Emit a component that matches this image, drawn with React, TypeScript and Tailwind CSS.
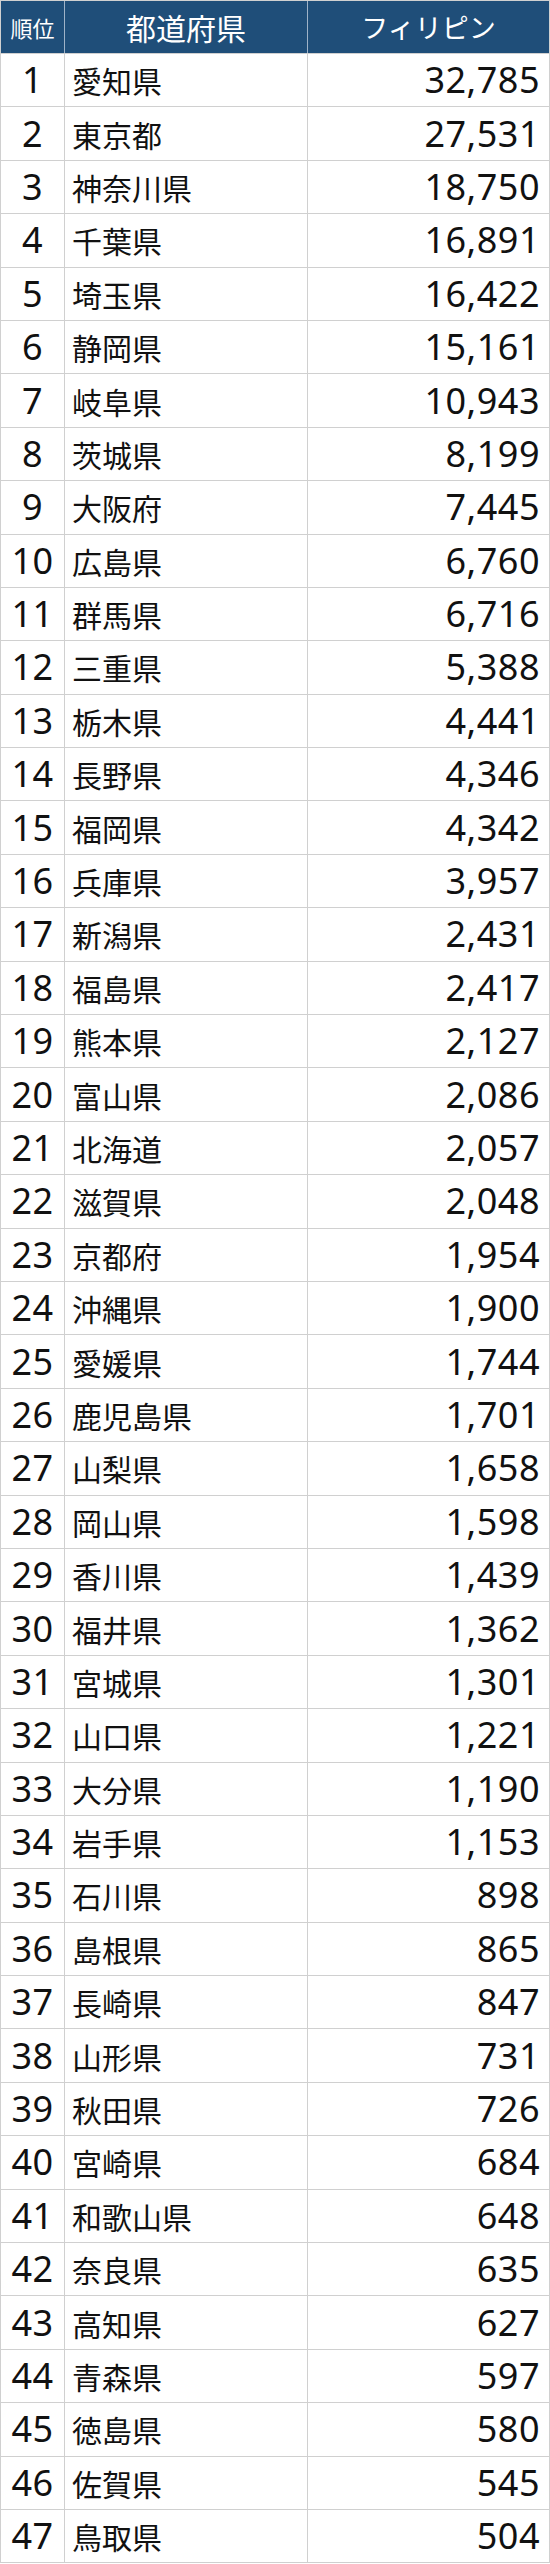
const rows: [string, string][] = [
  ['愛知県', '32,785'],
  ['東京都', '27,531'],
  ['神奈川県', '18,750'],
  ['千葉県', '16,891'],
  ['埼玉県', '16,422'],
  ['静岡県', '15,161'],
  ['岐阜県', '10,943'],
  ['茨城県', '8,199'],
  ['大阪府', '7,445'],
  ['広島県', '6,760'],
  ['群馬県', '6,716'],
  ['三重県', '5,388'],
  ['栃木県', '4,441'],
  ['長野県', '4,346'],
  ['福岡県', '4,342'],
  ['兵庫県', '3,957'],
  ['新潟県', '2,431'],
  ['福島県', '2,417'],
  ['熊本県', '2,127'],
  ['富山県', '2,086'],
  ['北海道', '2,057'],
  ['滋賀県', '2,048'],
  ['京都府', '1,954'],
  ['沖縄県', '1,900'],
  ['愛媛県', '1,744'],
  ['鹿児島県', '1,701'],
  ['山梨県', '1,658'],
  ['岡山県', '1,598'],
  ['香川県', '1,439'],
  ['福井県', '1,362'],
  ['宮城県', '1,301'],
  ['山口県', '1,221'],
  ['大分県', '1,190'],
  ['岩手県', '1,153'],
  ['石川県', '898'],
  ['島根県', '865'],
  ['長崎県', '847'],
  ['山形県', '731'],
  ['秋田県', '726'],
  ['宮崎県', '684'],
  ['和歌山県', '648'],
  ['奈良県', '635'],
  ['高知県', '627'],
  ['青森県', '597'],
  ['徳島県', '580'],
  ['佐賀県', '545'],
  ['鳥取県', '504'],
];

const jp = "font-['Noto_Sans_CJK_JP',sans-serif]";
const num = "font-['Noto_Sans','Noto_Sans_CJK_JP',sans-serif] tracking-[0.5px]";

export default function App() {
  return (
    <div className="w-[550px] bg-white text-[#111]">
      <div className="border-x border-t border-[#d0d0d0]">
        <div className="grid h-[53px] grid-cols-[64px_243px_1fr] border-b border-[#d0d0d0] bg-[#1f4e79] text-white">
          <div className={`flex items-center justify-center border-r border-[#9fb3c8] text-[22px] ${jp}`}>順位</div>
          <div className={`flex items-center justify-center border-r border-[#9fb3c8] text-[30px] ${jp}`}>都道府県</div>
          <div className={`flex items-center justify-center text-[27px] ${jp}`}>フィリピン</div>
        </div>
        {rows.map(([pref, count], i) => (
          <div key={pref} className="grid h-[53.4px] grid-cols-[64px_243px_1fr] border-b border-[#d0d0d0]">
            <div className={`flex items-center justify-center border-r border-[#d0d0d0] text-[36px] leading-none ${num}`}>
              {i + 1}
            </div>
            <div className={`flex items-center border-r border-[#d0d0d0] pl-[7px] text-[30px] leading-none ${jp}`}>
              {pref}
            </div>
            <div className={`flex items-center justify-end pr-[9px] text-[36px] leading-none ${num}`}>{count}</div>
          </div>
        ))}
      </div>
    </div>
  );
}
